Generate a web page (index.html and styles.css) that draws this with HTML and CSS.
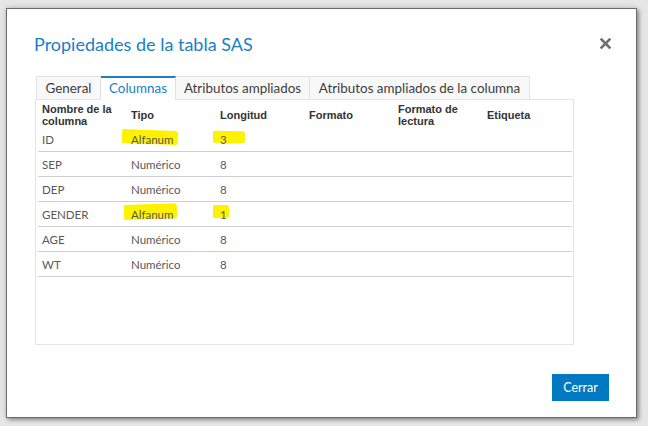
FILE: index.html
```html
<!DOCTYPE html>
<html>
<head>
<meta charset="utf-8">
<link rel="stylesheet" href="styles.css">
</head>
<body>
<div class="dialog">
  <div class="header">
    <h1 class="title">Propiedades de la tabla SAS</h1>
    <svg class="close" width="11" height="11" viewBox="0 0 11 11"><path d="M1.5 1.5 L9.5 9.5 M9.5 1.5 L1.5 9.5" stroke="#707070" stroke-width="2.6" stroke-linecap="square"/></svg>
  </div>
  <div class="tabs">
    <div class="tab t1">General</div>
    <div class="tab t2 active">Columnas</div>
    <div class="tab t3">Atributos ampliados</div>
    <div class="tab t4">Atributos ampliados de la columna</div>
  </div>
  <div class="panel">
    <div class="grid head">
      <div>Nombre de la<br>columna</div>
      <div>Tipo</div>
      <div>Longitud</div>
      <div>Formato</div>
      <div>Formato de<br>lectura</div>
      <div>Etiqueta</div>
    </div>
    <div class="grid row">
      <div>ID</div>
      <div><span class="mark m1"></span><span class="txt">Alfanum</span></div>
      <div><span class="mark m2"></span><span class="txt">3</span></div>
      <div></div><div></div><div></div>
    </div>
    <div class="grid row">
      <div>SEP</div><div>Numérico</div><div>8</div><div></div><div></div><div></div>
    </div>
    <div class="grid row">
      <div>DEP</div><div>Numérico</div><div>8</div><div></div><div></div><div></div>
    </div>
    <div class="grid row">
      <div>GENDER</div>
      <div><span class="mark m3"></span><span class="txt">Alfanum</span></div>
      <div><span class="mark m4"></span><span class="txt">1</span></div>
      <div></div><div></div><div></div>
    </div>
    <div class="grid row">
      <div>AGE</div><div>Numérico</div><div>8</div><div></div><div></div><div></div>
    </div>
    <div class="grid row">
      <div>WT</div><div>Numérico</div><div>8</div><div></div><div></div><div></div>
    </div>
  </div>
  <div class="footer">
    <button class="btn">Cerrar</button>
  </div>
</div>
</body>
</html>
```
FILE: styles.css
```css
html, body {
  margin: 0;
  padding: 0;
}
body {
  width: 648px;
  height: 426px;
  background: #e6e6e6;
  font-family: Lato, "Open Sans", sans-serif;
  overflow: hidden;
}
.dialog {
  box-sizing: border-box;
  margin: 8px 0 0 6px;
  width: 631px;
  height: 410px;
  background: #fff;
  border: 1px solid #6a6a6a;
  box-shadow: 2px 2px 4px rgba(0,0,0,0.35), 0 0 6px rgba(0,0,0,0.15);
  padding: 0 28px 0 28px;
  display: flex;
  flex-direction: column;
}
.header {
  display: flex;
  justify-content: space-between;
  align-items: center;
  height: 67px;
}
.title {
  margin: 0;
  font-weight: 400;
  font-size: 18px;
  color: #1a7fc4;
  padding-top: 3px;
  padding-left: 0;
  margin-left: -1px;
}
.close {
  margin-right: -3px;
  margin-top: 2px;
}
.tabs {
  display: flex;
  margin-left: 1px;
  height: 23px;
}
.tab {
  box-sizing: border-box;
  height: 24px;
  border: 1px solid #e2e2e2;
  border-left: none;
  background: #f8f8f8;
  color: #3d3d3d;
  font-size: 13.4px;
  padding-top: 3px;
  text-align: center;
  white-space: nowrap;
}
.t1 { width: 65px; border-left: 1px solid #e2e2e2; }
.t2 { width: 75px; }
.t3 { width: 134px; }
.t4 { width: 220px; }
.tab.active {
  background: #fff;
  color: #1a7fc4;
  border-top: 2px solid #1a7fc4;
  border-bottom: none;
  padding-top: 2px;
  position: relative;
  z-index: 1;
}
.panel {
  box-sizing: border-box;
  width: 539px;
  height: 246px;
  border: 1px solid #e4e4e4;
  padding: 0 1px 0 2px;
}
.grid {
  display: grid;
  grid-template-columns: 89px 89px 89px 89px 89px 89px;
  width: 534px;
}
.grid > div {
  padding-left: 4px;
  position: relative;
}
.head {
  box-sizing: border-box;
  height: 27px;
  align-items: center;
  font-family: "Liberation Sans", Arial, sans-serif;
  font-weight: 700;
  font-size: 11px;
  line-height: 12px;
  color: #333;
  padding-top: 2px;
}
.row {
  height: 25px;
  border-bottom: 1px solid #cfcfcf;
  box-sizing: border-box;
  font-size: 11.5px;
  color: #595959;
}
.row > div {
  display: flex;
  align-items: center;
}
.txt {
  position: relative;
}
.mark {
  position: absolute;
  background: #fff200;
  border-radius: 1px 3px 2px 1px;
}
.m1 { left: -5px; top: 3px; width: 56px; height: 14px; transform: rotate(2deg); }
.m2 { left: -3px; top: 4px; width: 32px; height: 12px; transform: rotate(1deg); }
.m3 { left: -3px; top: 2px; width: 53px; height: 15px; transform: rotate(-2deg); }
.m4 { left: -3px; top: 3px; width: 16px; height: 13px; }
.footer {
  display: flex;
  justify-content: flex-end;
  padding-top: 29px;
  margin-right: -1px;
}
.btn {
  background: #0079c1;
  color: #fff;
  border: none;
  width: 57px;
  height: 27px;
  font-family: Lato, "Open Sans", sans-serif;
  font-size: 12.5px;
  padding: 0;
}
```
